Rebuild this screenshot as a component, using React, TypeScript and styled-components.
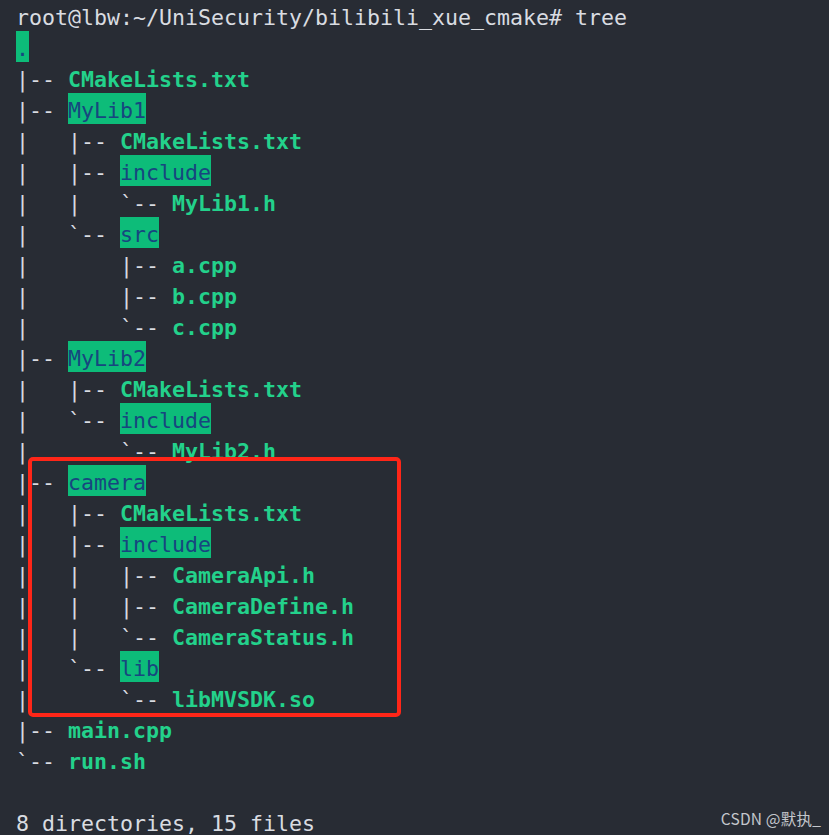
import React from 'react';
import styled, { createGlobalStyle } from 'styled-components';

const Global = createGlobalStyle`
  html, body {
    margin: 0;
    padding: 0;
    height: 100%;
    background: #282c34;
    overflow: hidden;
  }
  #root { height: 100%; }
`;

const Screen = styled.div`
  position: relative;
  width: 829px;
  height: 835px;
  box-sizing: border-box;
  padding-left: 16px;
  background: #282c34;
  font-family: "DejaVu Sans Mono", "Liberation Mono", monospace;
  font-size: 21.6px;
  color: #d9dce1;
  overflow: hidden;
`;

const Line = styled.div`
  height: 31px;
  line-height: 31px;
  white-space: pre;
`;

type Kind = 'plain' | 'file' | 'dir';

const Seg = styled.span<{ $kind: Kind }>`
  display: inline-block;
  box-sizing: border-box;
  height: 31px;
  padding-top: 4px;
  line-height: 27px;
  vertical-align: top;
  color: ${(p) => (p.$kind === 'file' ? '#23d18b' : p.$kind === 'dir' ? '#17467f' : '#d9dce1')};
  background: ${(p) => (p.$kind === 'dir' ? '#0dbc79' : 'transparent')};
  font-weight: ${(p) => (p.$kind === 'file' ? 700 : 400)};
`;

const Highlight = styled.div`
  position: absolute;
  left: 28px;
  top: 457px;
  width: 373px;
  height: 260px;
  box-sizing: border-box;
  border: 4px solid #ff2618;
  border-radius: 5px;
  pointer-events: none;
`;

const Watermark = styled.div`
  position: absolute;
  right: 8px;
  bottom: 9px;
  font-family: "Noto Sans CJK SC", "DejaVu Sans", sans-serif;
  font-size: 15.5px;
  line-height: 16px;
  letter-spacing: 0.2px;
  color: #c4c7cc;
`;

type L = [string, Kind][];

const lines: L[] = [
  [['root@lbw:~/UniSecurity/bilibili_xue_cmake# tree', 'plain']],
  [['.', 'dir']],
  [['|-- ', 'plain'], ['CMakeLists.txt', 'file']],
  [['|-- ', 'plain'], ['MyLib1', 'dir']],
  [['|   |-- ', 'plain'], ['CMakeLists.txt', 'file']],
  [['|   |-- ', 'plain'], ['include', 'dir']],
  [['|   |   `-- ', 'plain'], ['MyLib1.h', 'file']],
  [['|   `-- ', 'plain'], ['src', 'dir']],
  [['|       |-- ', 'plain'], ['a.cpp', 'file']],
  [['|       |-- ', 'plain'], ['b.cpp', 'file']],
  [['|       `-- ', 'plain'], ['c.cpp', 'file']],
  [['|-- ', 'plain'], ['MyLib2', 'dir']],
  [['|   |-- ', 'plain'], ['CMakeLists.txt', 'file']],
  [['|   `-- ', 'plain'], ['include', 'dir']],
  [['|       `-- ', 'plain'], ['MyLib2.h', 'file']],
  [['|-- ', 'plain'], ['camera', 'dir']],
  [['|   |-- ', 'plain'], ['CMakeLists.txt', 'file']],
  [['|   |-- ', 'plain'], ['include', 'dir']],
  [['|   |   |-- ', 'plain'], ['CameraApi.h', 'file']],
  [['|   |   |-- ', 'plain'], ['CameraDefine.h', 'file']],
  [['|   |   `-- ', 'plain'], ['CameraStatus.h', 'file']],
  [['|   `-- ', 'plain'], ['lib', 'dir']],
  [['|       `-- ', 'plain'], ['libMVSDK.so', 'file']],
  [['|-- ', 'plain'], ['main.cpp', 'file']],
  [['`-- ', 'plain'], ['run.sh', 'file']],
  [],
  [['8 directories, 15 files', 'plain']],
];

export default function App() {
  return (
    <>
      <Global />
      <Screen>
        {lines.map((segs, i) => (
          <Line key={i}>
            {segs.map(([t, k], j) => (
              <Seg key={j} $kind={k}>
                {t}
              </Seg>
            ))}
          </Line>
        ))}
        <Highlight />
        <Watermark>CSDN @默执_</Watermark>
      </Screen>
    </>
  );
}
